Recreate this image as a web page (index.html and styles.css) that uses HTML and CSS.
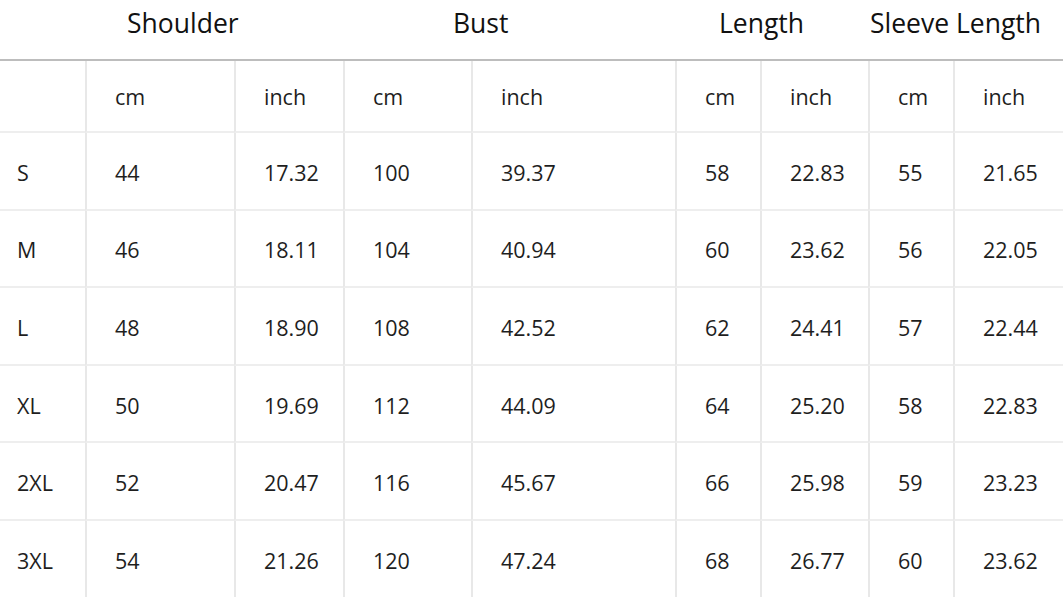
FILE: index.html
```html
<!DOCTYPE html>
<html>
<head>
<meta charset="utf-8">
<link rel="stylesheet" href="styles.css">
</head>
<body>
<div class="chart">
  <div class="head">
    <div></div>
    <div class="h">Shoulder</div>
    <div class="h">Bust</div>
    <div class="h">Length</div>
    <div class="h">Sleeve Length</div>
  </div>
  <div class="grid">
    <div class="c first sub"></div><div class="c sub">cm</div><div class="c sub">inch</div><div class="c sub">cm</div><div class="c sub">inch</div><div class="c sub">cm</div><div class="c sub">inch</div><div class="c sub">cm</div><div class="c sub">inch</div>

    <div class="c first">S</div><div class="c">44</div><div class="c">17.32</div><div class="c">100</div><div class="c">39.37</div><div class="c">58</div><div class="c">22.83</div><div class="c">55</div><div class="c">21.65</div>

    <div class="c first">M</div><div class="c">46</div><div class="c">18.11</div><div class="c">104</div><div class="c">40.94</div><div class="c">60</div><div class="c">23.62</div><div class="c">56</div><div class="c">22.05</div>

    <div class="c first">L</div><div class="c">48</div><div class="c">18.90</div><div class="c">108</div><div class="c">42.52</div><div class="c">62</div><div class="c">24.41</div><div class="c">57</div><div class="c">22.44</div>

    <div class="c first">XL</div><div class="c">50</div><div class="c">19.69</div><div class="c">112</div><div class="c">44.09</div><div class="c">64</div><div class="c">25.20</div><div class="c">58</div><div class="c">22.83</div>

    <div class="c first">2XL</div><div class="c">52</div><div class="c">20.47</div><div class="c">116</div><div class="c">45.67</div><div class="c">66</div><div class="c">25.98</div><div class="c">59</div><div class="c">23.23</div>

    <div class="c first last">3XL</div><div class="c last">54</div><div class="c last">21.26</div><div class="c last">120</div><div class="c last">47.24</div><div class="c last">68</div><div class="c last">26.77</div><div class="c last">60</div><div class="c last">23.62</div>
  </div>
</div>
</body>
</html>
```

FILE: styles.css
```css
html, body {
  margin: 0;
  padding: 0;
  background: #ffffff;
}
body {
  width: 1063px;
  height: 600px;
  overflow: hidden;
  font-family: "Open Sans", "Noto Sans", sans-serif;
}
.chart {
  width: 1063px;
}
.head {
  display: grid;
  grid-template-columns: 127px 326px 266px 151px 1fr;
  height: 59px;
  border-bottom: 2px solid #bdbdbd;
  box-sizing: content-box;
}
.h {
  font-size: 26.5px;
  line-height: 36px;
  padding-top: 4.5px;
  color: #111111;
  white-space: nowrap;
}
.grid {
  display: grid;
  grid-template-columns: 85px 149px 109px 128px 204px 85px 108px 85px 110px;
  grid-template-rows: 72px repeat(5, 77.6px) 76px;
}
.c {
  box-sizing: border-box;
  display: flex;
  align-items: center;
  padding-left: 28px;
  padding-top: 3px;
  border-left: 2px solid #e8e8e8;
  border-bottom: 2px solid #eeeeee;
  font-size: 21.5px;
  color: #1e1e1e;
  white-space: nowrap;
}
.c.sub {
  padding-top: 0;
}
.c.first {
  border-left: none;
  padding-left: 17px;
}
.c.last {
  border-bottom: none;
}
```
